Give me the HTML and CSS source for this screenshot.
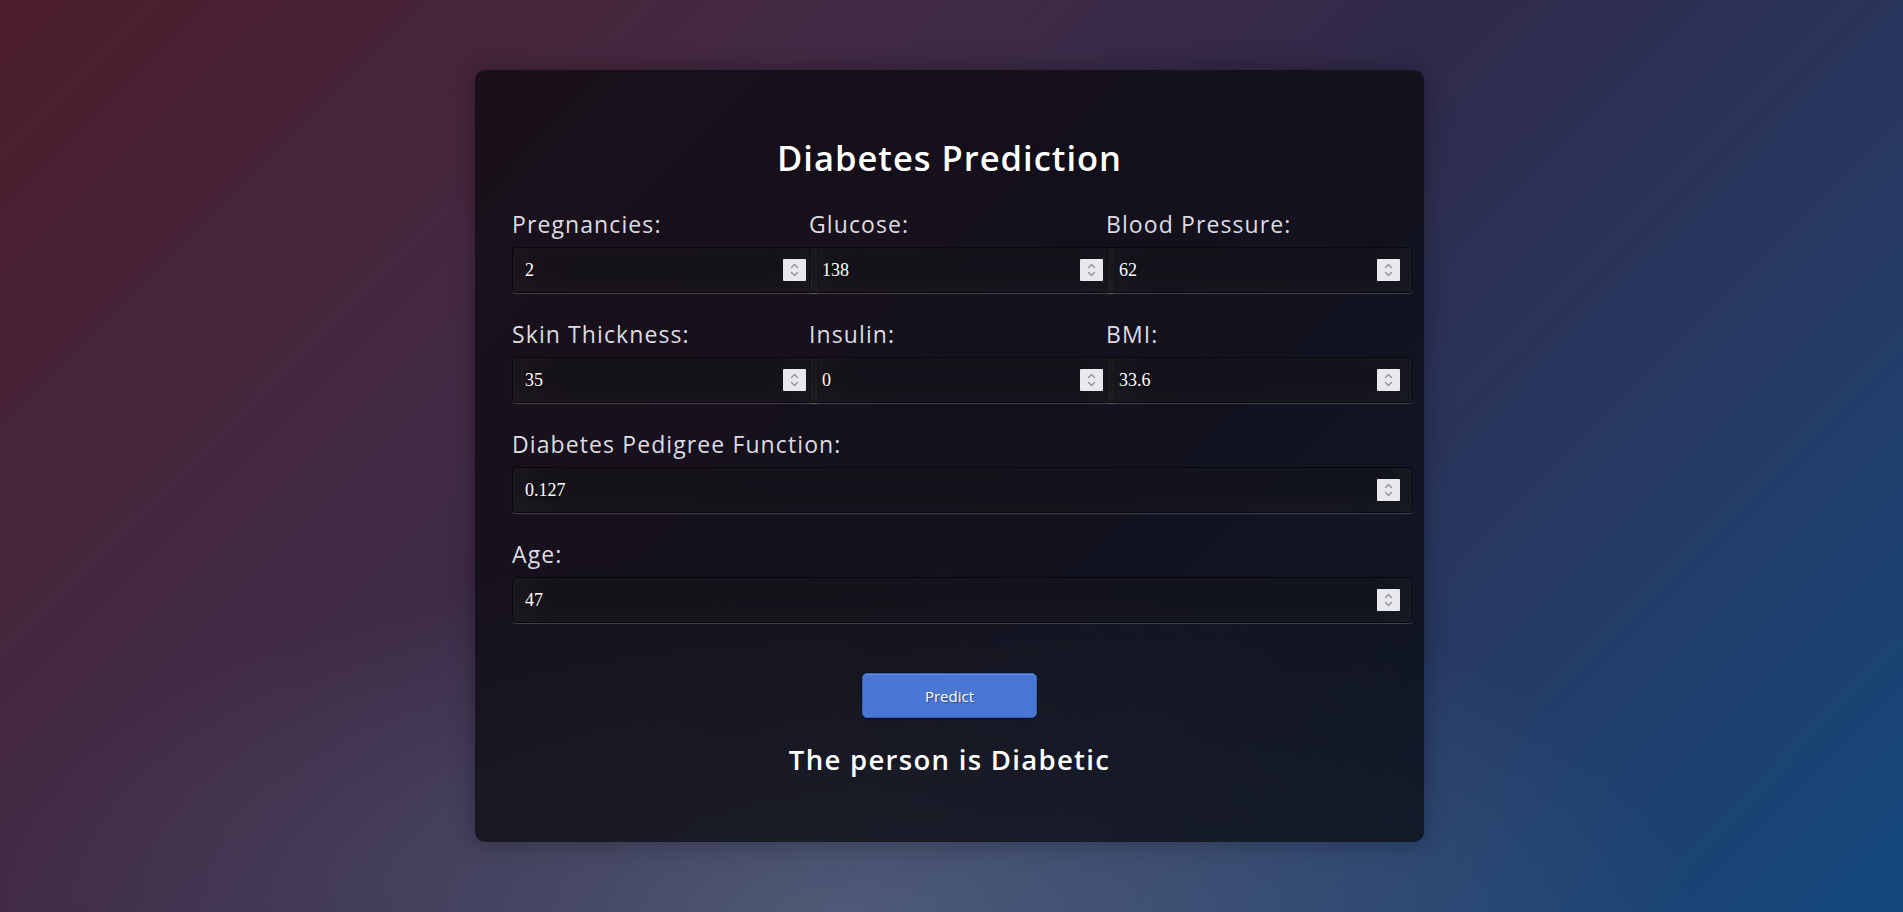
FILE: index.html
```html
<!DOCTYPE html>
<html lang="en">
<head>
<meta charset="utf-8">
<title>Diabetes Prediction</title>
<link rel="stylesheet" href="styles.css">
</head>
<body>
<main class="card">
  <h1 class="title">Diabetes Prediction</h1>
  <form class="form">
    <div class="grid">
      <div class="field">
        <label class="label" for="preg">Pregnancies:</label>
        <div class="control">
          <input class="input" id="preg" type="number" value="2">
          <span class="spin"><svg viewBox="0 0 23 22" width="23" height="22"><path d="M8.5 8.5 11.5 5.5 14.5 8.5M8.5 13.5 11.5 16.5 14.5 13.5"/></svg></span>
        </div>
      </div>
      <div class="field">
        <label class="label" for="glu">Glucose:</label>
        <div class="control">
          <input class="input" id="glu" type="number" value="138">
          <span class="spin"><svg viewBox="0 0 23 22" width="23" height="22"><path d="M8.5 8.5 11.5 5.5 14.5 8.5M8.5 13.5 11.5 16.5 14.5 13.5"/></svg></span>
        </div>
      </div>
      <div class="field">
        <label class="label" for="bp">Blood Pressure:</label>
        <div class="control">
          <input class="input" id="bp" type="number" value="62">
          <span class="spin"><svg viewBox="0 0 23 22" width="23" height="22"><path d="M8.5 8.5 11.5 5.5 14.5 8.5M8.5 13.5 11.5 16.5 14.5 13.5"/></svg></span>
        </div>
      </div>
      <div class="field">
        <label class="label" for="skin">Skin Thickness:</label>
        <div class="control">
          <input class="input" id="skin" type="number" value="35">
          <span class="spin"><svg viewBox="0 0 23 22" width="23" height="22"><path d="M8.5 8.5 11.5 5.5 14.5 8.5M8.5 13.5 11.5 16.5 14.5 13.5"/></svg></span>
        </div>
      </div>
      <div class="field">
        <label class="label" for="ins">Insulin:</label>
        <div class="control">
          <input class="input" id="ins" type="number" value="0">
          <span class="spin"><svg viewBox="0 0 23 22" width="23" height="22"><path d="M8.5 8.5 11.5 5.5 14.5 8.5M8.5 13.5 11.5 16.5 14.5 13.5"/></svg></span>
        </div>
      </div>
      <div class="field">
        <label class="label" for="bmi">BMI:</label>
        <div class="control">
          <input class="input" id="bmi" type="number" value="33.6">
          <span class="spin"><svg viewBox="0 0 23 22" width="23" height="22"><path d="M8.5 8.5 11.5 5.5 14.5 8.5M8.5 13.5 11.5 16.5 14.5 13.5"/></svg></span>
        </div>
      </div>
    </div>
    <div class="field">
      <label class="label" for="dpf">Diabetes Pedigree Function:</label>
      <div class="control">
        <input class="input" id="dpf" type="number" value="0.127">
        <span class="spin"><svg viewBox="0 0 23 22" width="23" height="22"><path d="M8.5 8.5 11.5 5.5 14.5 8.5M8.5 13.5 11.5 16.5 14.5 13.5"/></svg></span>
      </div>
    </div>
    <div class="field">
      <label class="label" for="age">Age:</label>
      <div class="control">
        <input class="input" id="age" type="number" value="47">
        <span class="spin"><svg viewBox="0 0 23 22" width="23" height="22"><path d="M8.5 8.5 11.5 5.5 14.5 8.5M8.5 13.5 11.5 16.5 14.5 13.5"/></svg></span>
      </div>
    </div>
    <div class="actions">
      <button class="btn" type="button">Predict</button>
    </div>
  </form>
  <h2 class="result">The person is Diabetic</h2>
</main>
</body>
</html>
```

FILE: styles.css
```css
* {
  box-sizing: content-box;
}

html, body {
  height: 100%;
}

body {
  margin: 0;
  font-family: "Open Sans", "Noto Sans", sans-serif;
  color: #fff;
  display: flex;
  align-items: center;
  justify-content: center;
  background-color: #2a3050;
  background-image:
    radial-gradient(ellipse 45% 40% at 44% 100%, rgba(120, 140, 160, 0.45) 0%, rgba(120, 140, 160, 0) 100%),
    linear-gradient(135deg, #4c1d2b 0%, #432a44 30%, #302a4a 52%, #273a64 75%, #13487d 100%);
  overflow: hidden;
}

.card {
  width: 875px;
  margin-right: 4px;
  padding: 37px;
  background: rgba(8, 8, 12, 0.72);
  border-radius: 10px;
  box-shadow: 0 0 24px rgba(0, 0, 0, 0.3);
}

.title {
  margin: 26px 0 27px;
  font-size: 34.5px;
  line-height: 49px;
  font-weight: 600;
  letter-spacing: 1px;
  text-align: center;
  text-shadow: 0 0 10px rgba(0, 0, 0, 0.3);
}

.form {
  margin: 0;
}

.grid {
  display: grid;
  grid-template-columns: repeat(3, 1fr);
  column-gap: 16px;
}

.field {
  display: flex;
  flex-direction: column;
  align-items: stretch;
  margin-bottom: 26px;
  min-width: 0;
}

.label {
  display: block;
  font-size: 23px;
  line-height: 30px;
  letter-spacing: 1.1px;
  color: #dcdce2;
  margin-bottom: 8px;
}

.control {
  position: relative;
  height: 46px;
}

.input {
  display: block;
  width: 100%;
  height: 20px;
  margin: 0;
  padding: 12px;
  font-family: "Liberation Serif", serif;
  font-size: 18px;
  line-height: 20px;
  color: #fff;
  background: rgba(0, 0, 0, 0.3);
  border: 1px solid rgba(0, 0, 0, 0.3);
  border-radius: 4px;
  outline: none;
  text-shadow: 1px 1px 1px rgba(0, 0, 0, 0.3);
  box-shadow: inset 0 -5px 45px rgba(100, 100, 100, 0.2), 0 1px 1px rgba(255, 255, 255, 0.2);
  -moz-appearance: textfield;
}

.input::-webkit-inner-spin-button,
.input::-webkit-outer-spin-button {
  -webkit-appearance: none;
  margin: 0;
}

.spin {
  position: absolute;
  top: 12px;
  left: calc(100% - 10px);
  width: 23px;
  height: 22px;
  background: #e9e9ed;
  border-radius: 1px;
}

.spin svg {
  display: block;
  fill: none;
  stroke: #8e8e96;
  stroke-width: 1.2;
  stroke-linecap: round;
  stroke-linejoin: round;
}

.actions {
  display: flex;
  justify-content: center;
  margin-top: 50px;
}

.btn {
  width: 175px;
  height: 45px;
  padding: 0;
  box-sizing: border-box;
  font-family: "Open Sans", sans-serif;
  font-size: 15px;
  color: #fff;
  background-color: #4a77d4;
  border: 1px solid #3762bc;
  border-radius: 5px;
  text-shadow: 1px 1px 1px rgba(0, 0, 0, 0.4);
  box-shadow: inset 0 1px 0 rgba(255, 255, 255, 0.2), 0 1px 2px rgba(0, 0, 0, 0.5);
  cursor: pointer;
}

.result {
  margin: 23px 0 26px;
  font-size: 27.5px;
  line-height: 38px;
  font-weight: 600;
  letter-spacing: 1.3px;
  text-align: center;
}
```
